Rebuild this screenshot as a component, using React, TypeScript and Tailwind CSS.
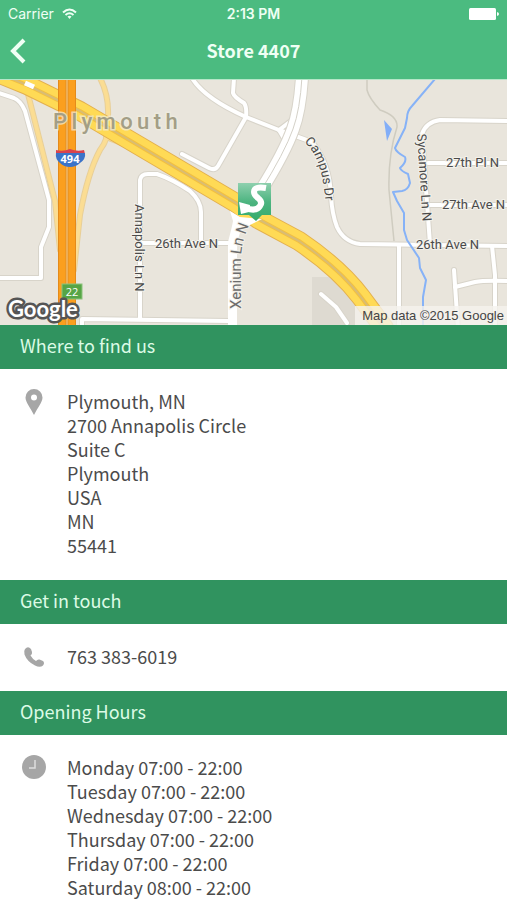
import React from 'react';

const address = ['Plymouth, MN', '2700 Annapolis Circle', 'Suite C', 'Plymouth', 'USA', 'MN', '55441'];

const hours = [
    { day: 'Monday', time: '07:00 - 22:00' },
    { day: 'Tuesday', time: '07:00 - 22:00' },
    { day: 'Wednesday', time: '07:00 - 22:00' },
    { day: 'Thursday', time: '07:00 - 22:00' },
    { day: 'Friday', time: '07:00 - 22:00' },
    { day: 'Saturday', time: '08:00 - 22:00' },
];

// Local streets, drawn twice: once as the grey casing, once as the white fill
const streets = [
    'M-4 12 L14 18 Q21 21 25 31 L49 120 V147 L41 167 V198 H-4',
    'M140 238 V100 Q141 94 148 94 H157 Q172 99 190 111 Q201 121 201 132 V163',
    'M141 163 H230',
    'M82 249 V239 L229 241',
    'M192 -2 Q204 18 246 37 L279 50 L312 62',
    'M234 -2 L233 13 Q234 17 244 23 Q247 27 246 37 L218 86 Q215 91 209 88 L182 74',
    'M312 62 Q330 84 331 116 Q332 134 337 147 Q344 162 360 164 L510 166',
    'M279 50 L291 41',
    'M279 50 L286 62',
    'M510 41 L440 40 Q426 42 422 54 L430 164',
    'M428 83 H510',
    'M430 125 H510',
    'M399 165 V249',
    'M492 166 L495 195 V249',
    'M454 190 L458 249',
    'M455 207 L475 202 Q484 200 510 201',
    'M321 214 L336 227 L347 243',
];

const ramps = [
    'M28 14 L55 121 L60 170',
    'M100 -2 Q109 15 108 36 Q111 56 100 70 Q88 92 80 135 L74 190',
    'M106 57 Q114 60 138 70',
];

const highway = 'M-12 -11 L27 5 L80 31 L170 84 L236 123 L258 139 L299 161 Q339 188 361 217 L384 248';
const xenium = 'M302 -3 Q300 30 293 49 Q285 72 260 112';

function Strokes({ paths, color, width }: { paths: string[]; color: string; width: number }) {
    return (
        <g fill="none" stroke={color} strokeWidth={width} strokeLinecap="round" strokeLinejoin="round">
            {paths.map(d => (
                <path key={d} d={d} />
            ))}
        </g>
    );
}

function StoreMap() {
    return (
        <svg
            className="block h-[245px] w-full bg-[#e9e5dc]"
            viewBox="0 0 507 245"
            preserveAspectRatio="xMidYMid slice"
            role="img"
            aria-label="Map of the store"
        >
            <defs>
                <linearGradient id="pin" x1="0" y1="0" x2="0" y2="1">
                    <stop offset="0" stopColor="#8fd0ae" />
                    <stop offset="0.5" stopColor="#4cb480" />
                    <stop offset="1" stopColor="#35ab6b" />
                </linearGradient>
                <path id="campus" d="M304 62 C317 73 324 93 326 130" />
                <path id="sycamore" d="M417 54 L423 148" />
                <path id="xenium" d="M241 229 L241 176 Q242 160 252 138" />
            </defs>

            <path d="M312 197 H340 L384 245 H312 Z" fill="#dedad1" />

            {/* footpath, creek and pond */}
            <path d="M367 -1 V10 Q369 18 380 30 Q398 36 397 47 Q388 75 389 110 L394 161" fill="none" stroke="#cfccc0" strokeWidth="1.5" />
            <path d="M384 40 L392 49 L387 61 Z" fill="#82aef8" />

            <Strokes paths={streets} color="#d8d4ca" width={6} />
            <Strokes paths={streets} color="#ffffff" width={4} />

            <path
                d="M435 -1 L412 26 Q407 31 407 38 L405 48 L395 68 Q396 72 405 77 Q407 82 400 88 Q401 91 408 94 L410 103 Q408 110 402 111 L393 112 L397 121 L404 133 V150 L407 160 L419 178 L420 188 L426 200 L423 217 V245"
                fill="none"
                stroke="#86b2f7"
                strokeWidth="2"
                strokeLinejoin="round"
            />

            <Strokes paths={ramps} color="#e8cf98" width={6} />
            <Strokes paths={ramps} color="#fbdd93" width={4} />

            <Strokes paths={[highway]} color="#e3b04f" width={20} />
            <Strokes paths={[highway]} color="#ffda55" width={18} />
            <Strokes paths={[highway]} color="#f2c042" width={4} />
            <Strokes paths={[highway]} color="#d9bd74" width={2} />
            <path d="M25 3 L34 7" stroke="#ffffff" strokeWidth="5" />

            <path d="M67 0 V245" stroke="#e48a1a" strokeWidth="18" />
            <path d="M67 0 V245" stroke="#fb9f1e" strokeWidth="16" />
            <path d="M67 0 V245" stroke="#e08c22" strokeWidth="3" />
            <path d="M67 0 V245" stroke="#f8cf8c" strokeWidth="1" />

            {/* Xenium Ln widens out where it meets the highway */}
            <Strokes paths={[xenium]} color="#d8d4ca" width={14} />
            <Strokes paths={[xenium]} color="#ffffff" width={12} />
            <Strokes paths={[xenium]} color="#d4d1c8" width={1} />
            <path d="M230 131 L240 137 L262 139 L242 149 Q237 157 237 170 V245 H228 V162 Q232 147 233 141 Z" fill="#ffffff" />

            <g className="font-['Roboto',sans-serif]" fill="#4a4a4a" stroke="#f3f1ea" strokeWidth="2" paintOrder="stroke" fontSize="13">
                <text x="446" y="87">27th Pl N</text>
                <text x="442" y="129">27th Ave N</text>
                <text x="416" y="169">26th Ave N</text>
                <text x="155" y="168">26th Ave N</text>
                <text transform="translate(135 124) rotate(90)">Annapolis Ln N</text>
                <text>
                    <textPath href="#campus">Campus Dr</textPath>
                </text>
                <text>
                    <textPath href="#sycamore">Sycamore Ln N</textPath>
                </text>
                <text fontSize="15" fill="#6b6b6b">
                    <textPath href="#xenium">Xenium Ln N</textPath>
                </text>
            </g>
            <text className="font-['Roboto',sans-serif] tracking-[0.2em]" x="53" y="49" fontSize="22" fontWeight="500" fill="#a39e86" stroke="#f0eddf" strokeOpacity="0.7" strokeWidth="3" paintOrder="stroke">
                Plymouth
            </text>

            {/* interstate shield */}
            <path d="M56 70 Q63 72 70 69 Q77 72 84 70 L85 74 H56 Z" fill="#d8434e" />
            <path d="M56 73 H85 Q86 79 80 83 Q76 87 70 87 Q64 87 60 83 Q55 79 56 73 Z" fill="#3b73c8" />
            <text className="font-['Open_Sans',sans-serif]" x="70" y="83" fontSize="11" fontWeight="700" textAnchor="middle" fill="#ffffff">494</text>

            <rect x="62" y="204" width="20" height="15" fill="#57a546" stroke="#8cc47c" />
            <text className="font-['Open_Sans',sans-serif]" x="72" y="216" fontSize="11" textAnchor="middle" fill="#ffffff">22</text>

            {/* store pin */}
            <path d="M238 103 H271 V135 H262 L256 141 L249 135 H238 Z" fill="url(#pin)" />
            <path d="M266 108 Q254 106 254 112 Q254 115 258 118 Q263 122 260 126 Q256 132 246 128" fill="none" stroke="#ffffff" strokeWidth="6" />
            <path d="M239 122 L250 125 L249 132 L241 134 Z" fill="#ffffff" />

            <text className="font-['Lato',sans-serif]" x="8" y="237" fontSize="22" fontWeight="700" fill="#ffffff" stroke="#555555" strokeWidth="5" strokeLinejoin="round" paintOrder="stroke">
                Google
            </text>

            <rect x="355" y="226" width="152" height="19" fill="#f5f3ee" fillOpacity="0.8" />
            <text className="font-['Liberation_Sans',sans-serif]" x="504" y="240" fontSize="13" textAnchor="end" fill="#444444">
                Map data ©2015 Google
            </text>
        </svg>
    );
}

function Section({ title, icon, children }: { title: string; icon: React.ReactNode; children: React.ReactNode }) {
    return (
        <section>
            <h2 className="bg-[#30935f] px-5 pt-2 pb-3 text-lg leading-6 text-[#dcfbe6]">{title}</h2>
            <div className="flex gap-[19px] px-5 pt-5 pb-[23px]">
                <div className="flex w-7 shrink-0 justify-center text-[#a6a6a6]">{icon}</div>
                <div className="text-lg leading-6 text-[#4b4b4b]">{children}</div>
            </div>
        </section>
    );
}

export default function App() {
    return (
        <div className="min-h-screen bg-white font-['Noto_Sans_CJK_SC',sans-serif]">
            <header className="border-b border-[#b5e6c8] bg-[#4bbb80] text-[#effff4]">
                <div className="grid grid-cols-3 items-center px-2 pt-1 font-['Inter',sans-serif] text-sm leading-5">
                    <div className="flex items-center gap-2">
                        <span>Carrier</span>
                        <svg width="15" height="12" viewBox="0 0 15 12" fill="none" stroke="currentColor" strokeWidth="2" aria-hidden="true">
                            <path d="M1 4.500 Q7.500 -1.500 14 4.500" />
                            <path d="M3.500 7 Q7.500 3.500 11.500 7" />
                            <path d="M5.500 8.500 Q7.500 7 9.500 8.500 L7.500 11 Z" fill="currentColor" stroke="none" />
                        </svg>
                    </div>
                    <span className="text-center font-semibold">2:13 PM</span>
                    <svg className="justify-self-end" width="30" height="12" viewBox="0 0 30 12" fill="#ffffff" aria-hidden="true">
                        <rect width="27" height="12" rx="1.500" />
                        <path d="M28 4 Q30 4.500 30 6 Q30 7.500 28 8 Z" />
                    </svg>
                </div>
                <div className="grid grid-cols-[40px_1fr_40px] items-center pt-3 pb-[15px]">
                    <button type="button" aria-label="Back" className="flex h-7 items-center pl-2">
                        <svg width="20" height="28" viewBox="0 0 20 28" fill="none" stroke="currentColor" strokeWidth="4" aria-hidden="true">
                            <path d="M16 4 L5 15 L16 26" />
                        </svg>
                    </button>
                    <h1 className="text-center text-lg leading-7 font-bold">Store 4407</h1>
                </div>
            </header>

            <StoreMap />

            <main>
                <Section
                    title="Where to find us"
                    icon={
                        <svg width="18" height="26" viewBox="0 0 18 26" aria-hidden="true">
                            <path fill="currentColor" fillRule="evenodd" d="M9 0 A8.500 8.500 0 0 1 17.500 8.500 C17.500 13 13 18 9 26 C5 18 0.500 13 0.500 8.500 A8.500 8.500 0 0 1 9 0 Z M9 5.500 A3 3 0 1 0 9 11.500 A3 3 0 1 0 9 5.500 Z" />
                        </svg>
                    }
                >
                    <address className="not-italic">
                        {address.map((line, i) => (
                            <div key={i}>{line}</div>
                        ))}
                    </address>
                </Section>

                <Section
                    title="Get in touch"
                    icon={
                        <svg width="22" height="24" viewBox="0 0 22 24" fill="currentColor" aria-hidden="true">
                            <path d="M2 5 Q5 1.500 8 5 L9 8 Q9.500 10 7.500 11.500 Q9.500 15 13 17 Q14.500 15 16.500 15.500 L20 17 Q22 19 20 21.500 Q17 24 12 21.500 Q4 17.500 1.500 10.500 Q0.500 7 2 5 Z" />
                        </svg>
                    }
                >
                    <a href="tel:7633836019">763 383-6019</a>
                </Section>

                <Section
                    title="Opening Hours"
                    icon={
                        <svg width="24" height="24" viewBox="0 0 24 24" aria-hidden="true">
                            <circle cx="12" cy="12" r="12" fill="currentColor" />
                            <path d="M13 5 V13 H7" fill="none" stroke="#dedede" strokeWidth="1.500" />
                        </svg>
                    }
                >
                    <ul>
                        {hours.map(h => (
                            <li key={h.day}>
                                {h.day} {h.time}
                            </li>
                        ))}
                    </ul>
                </Section>
            </main>
        </div>
    );
}
